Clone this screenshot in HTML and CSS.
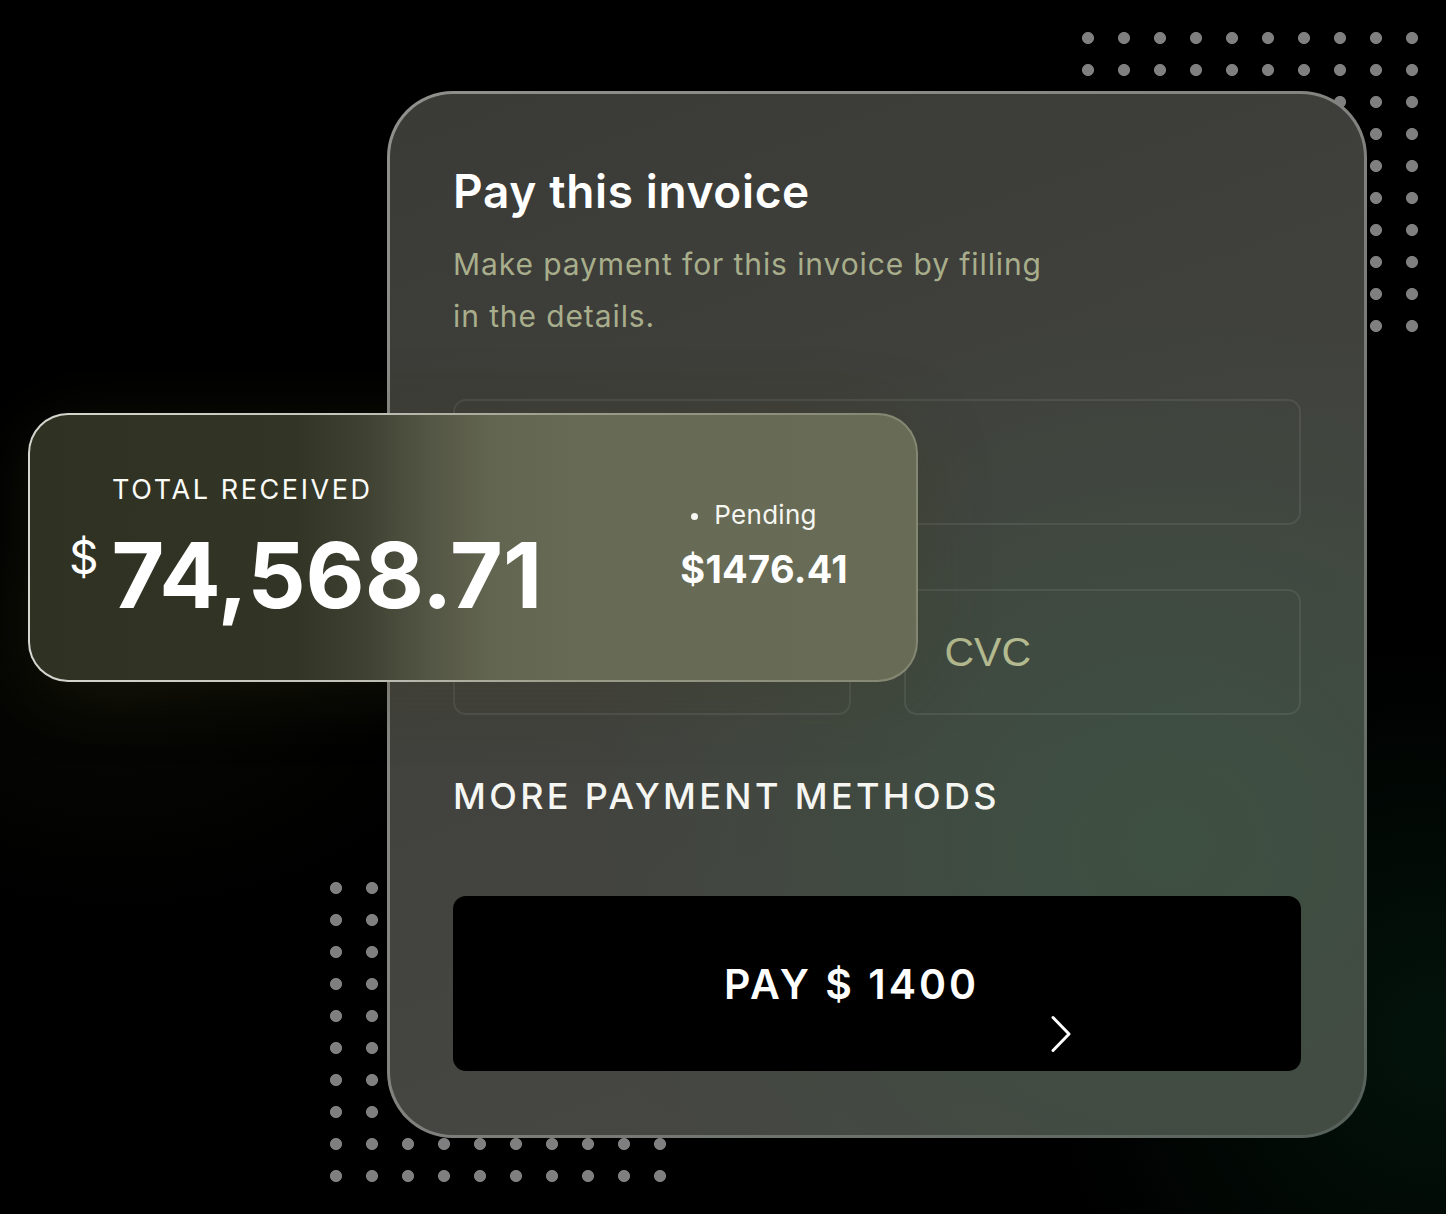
FILE: index.html
```html
<!DOCTYPE html>
<html lang="en">
<head>
<meta charset="utf-8">
<title>Pay this invoice</title>
<link rel="stylesheet" href="styles.css">
</head>
<body>
<div class="stage">
  <div class="dots dots-tr"></div>
  <div class="dots dots-bl"></div>

  <section class="invoice">
    <h1 class="invoice-title">Pay this invoice</h1>
    <p class="invoice-sub">Make payment for this invoice by filling in the details.</p>
    <div class="field"></div>
    <div class="field-row">
      <div class="field"></div>
      <div class="field"><span class="placeholder">CVC</span></div>
    </div>
    <h2 class="methods">MORE PAYMENT METHODS</h2>
    <button class="pay-btn" type="button">
      <span class="pay-text">PAY $ 1400</span>
      <svg class="pay-chevron" width="22" height="38" viewBox="0 0 22 38" aria-hidden="true">
        <polyline points="3,2.5 19,19 3,35.5" fill="none" stroke="#fff" stroke-width="3" stroke-linecap="round" stroke-linejoin="round"/>
      </svg>
    </button>
  </section>

  <div class="total-card">
    <div class="total-main">
      <div class="total-label">TOTAL RECEIVED</div>
      <div class="total-amount"><span class="cur">$</span><span class="num">74,568.71</span></div>
    </div>
    <div class="pending">
      <div class="pending-label"><span class="bullet"></span>Pending</div>
      <div class="pending-amount">$1476.41</div>
    </div>
  </div>
</div>
</body>
</html>
```

FILE: styles.css
```css
* { box-sizing: border-box; }

html, body {
  margin: 0;
  padding: 0;
  background: #000;
}

body {
  font-family: "Inter", "Noto Sans", sans-serif;
  color: #fff;
}

.stage {
  position: relative;
  width: 1446px;
  height: 1214px;
  overflow: hidden;
  padding: 91px 0 0 387px;
  background:
    radial-gradient(520px 520px at 1440px 1040px, rgba(6, 36, 20, 0.55), rgba(6, 36, 20, 0) 75%),
    radial-gradient(420px 260px at 120px 700px, rgba(40, 40, 20, 0.18), rgba(40, 40, 20, 0) 80%),
    #000;
}

/* decorative dot grids */
.dots {
  position: absolute;
  width: 360px;
  height: 320px;
  background-image: radial-gradient(circle at 18px 16px, #7f7f7f 5.6px, rgba(127,127,127,0) 6.4px);
  background-size: 36px 32px;
  z-index: 0;
}
.dots-tr { left: 1070px; top: 22px; }
.dots-bl { left: 318px; top: 872px; }

/* main invoice card */
.invoice {
  position: relative;
  z-index: 1;
  width: 980px;
  height: 1047px;
  border: 3px solid transparent;
  border-radius: 66px;
  padding: 70px 63px 0 63px;
  background:
    radial-gradient(600px 560px at 80% 72%, rgba(61, 80, 66, 1) 0%, rgba(61, 80, 66, 0.55) 45%, rgba(61, 80, 66, 0) 100%) padding-box,
    linear-gradient(160deg, #3a3a36 0%, #41413d 45%, #484844 100%) padding-box,
    linear-gradient(135deg, #8f8f8c 0%, #82827f 50%, #6c716c 75%, #55605a 100%) border-box;
}

.invoice-title {
  margin: 0;
  font-size: 46px;
  line-height: 54px;
  font-weight: 600;
  letter-spacing: 0.65px;
  color: #fff;
}

.invoice-sub {
  margin: 20px 0 0 0;
  max-width: 620px;
  font-size: 30px;
  line-height: 52px;
  font-weight: 400;
  letter-spacing: 0.9px;
  color: #a8ae8b;
}

.field {
  height: 126px;
  margin-top: 57px;
  border: 2px solid rgba(255, 255, 255, 0.08);
  border-radius: 13px;
  display: flex;
  align-items: center;
  padding-left: 39px;
}

.field-row {
  display: grid;
  grid-template-columns: 1fr 1fr;
  column-gap: 53px;
  margin-top: 64px;
}
.field-row .field { margin-top: 0; }

.placeholder {
  font-family: "Liberation Sans", Arial, sans-serif;
  font-size: 41px;
  color: #b4ba8f;
}

.methods {
  margin: 59px 0 0 0;
  font-size: 36px;
  line-height: 44px;
  font-weight: 500;
  letter-spacing: 3.35px;
  color: #f5f5f2;
}

.pay-btn {
  margin-top: 78px;
  width: 100%;
  height: 175px;
  border: 0;
  border-radius: 13px;
  background: #000;
  color: #fff;
  font-family: inherit;
  display: flex;
  align-items: center;
  justify-content: center;
  padding: 0 0 0 42px;
  cursor: pointer;
}

.pay-text {
  font-size: 41px;
  line-height: 50px;
  font-weight: 600;
  letter-spacing: 3px;
}

.pay-chevron {
  margin-left: 71px;
  margin-top: 101px;
  flex: none;
}

/* overlay card */
.total-card {
  position: absolute;
  z-index: 2;
  left: 28px;
  top: 413px;
  width: 890px;
  height: 269px;
  border: 2px solid transparent;
  border-radius: 40px;
  padding: 58px 68px 0 82px;
  display: flex;
  align-items: flex-start;
  background:
    linear-gradient(90deg, #2f3123 0%, #323426 30%, #3f4132 38%, #545645 45%, #62654f 52%, #676b55 62%, #686c56 100%) padding-box,
    linear-gradient(90deg, #d6d6d0 0%, #c4c4bc 35%, #9c9e8c 60%, #838671 100%) border-box;
  box-shadow: 0 10px 70px rgba(60, 60, 30, 0.28);
}

.total-label {
  font-size: 27px;
  line-height: 33px;
  font-weight: 400;
  letter-spacing: 2.6px;
  color: #fbfbf8;
}

.total-amount {
  margin-top: 19px;
  display: flex;
  align-items: flex-start;
  margin-left: -43px;
}

.cur {
  font-size: 46px;
  line-height: 44px;
  font-weight: 400;
  margin-top: 10px;
  margin-right: 13px;
}

.num {
  font-size: 91px;
  line-height: 100px;
  font-weight: 700;
  letter-spacing: 0;
}

.pending {
  margin-left: auto;
  padding-top: 26px;
  display: flex;
  flex-direction: column;
  align-items: flex-start;
}

.pending-label {
  display: flex;
  align-items: center;
  padding-left: 11px;
  font-size: 26px;
  line-height: 32px;
  font-weight: 400;
  letter-spacing: 0.3px;
  color: #f6f6f2;
}

.bullet {
  width: 7px;
  height: 7px;
  border-radius: 50%;
  background: #f6f6f2;
  margin-right: 16px;
  margin-top: 2px;
}

.pending-amount {
  margin-top: 15px;
  font-size: 38px;
  line-height: 46px;
  font-weight: 700;
  letter-spacing: 0.3px;
  color: #fff;
}
```
